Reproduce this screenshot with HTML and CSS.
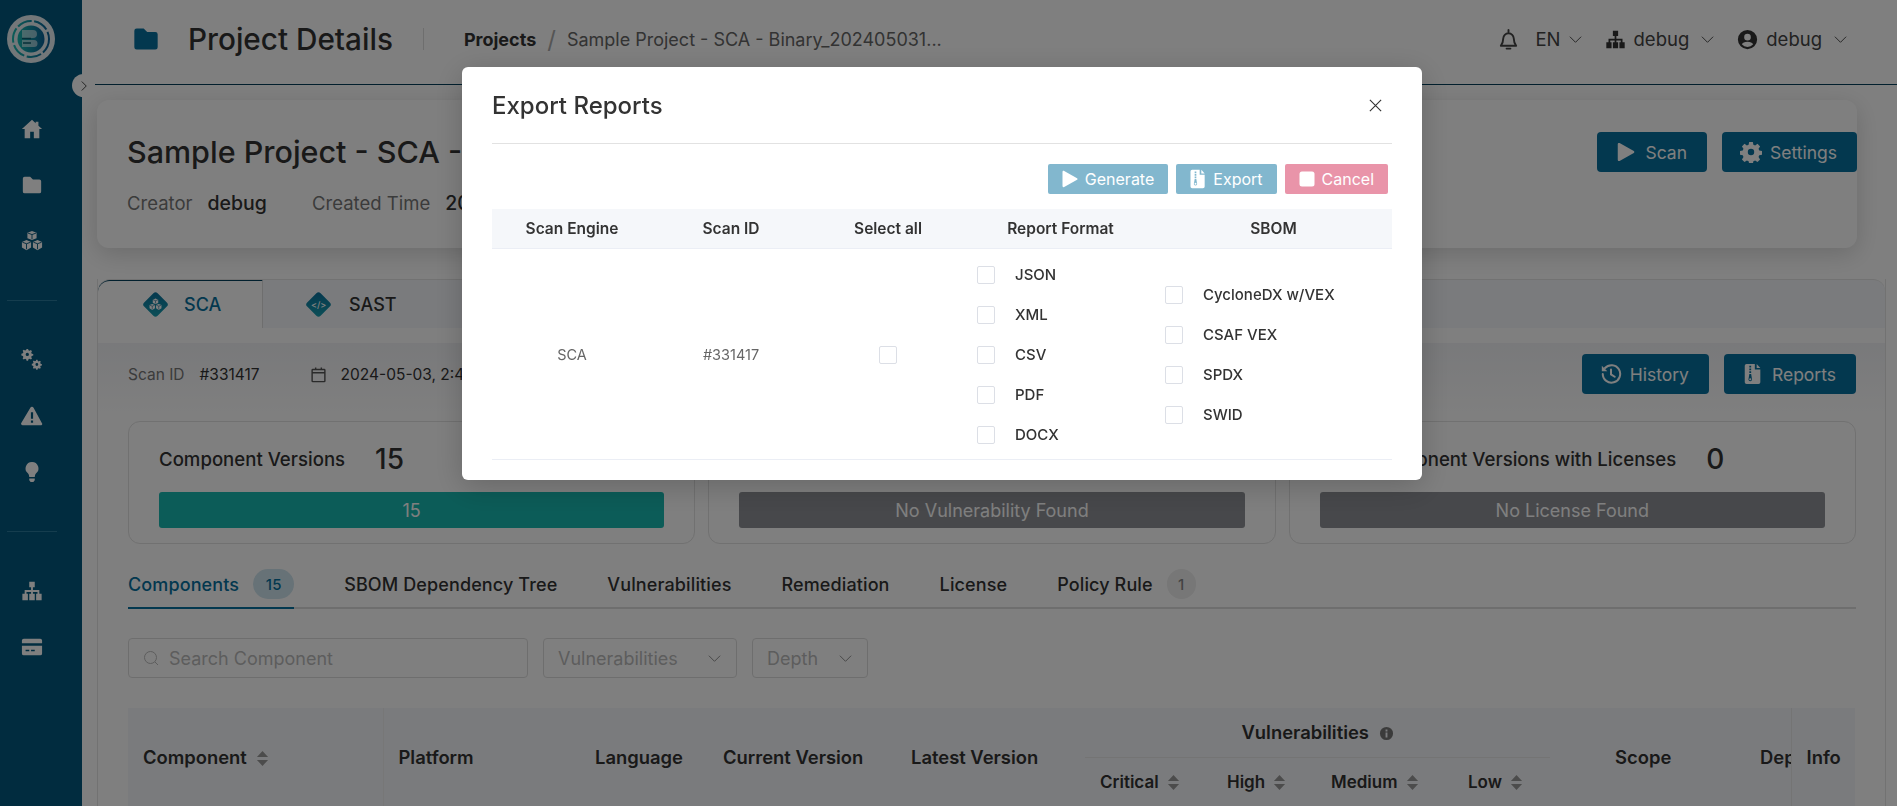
FILE: index.html
```html
<!DOCTYPE html>
<html lang="en">
<head>
    <meta charset="UTF-8">
    <meta name="viewport" content="width=device-width, initial-scale=1.0">
    <title>Project Details</title>
    <link rel="stylesheet" href="styles.css">
</head>
<body>
    <svg class="icon-defs" width="0" height="0">
        <defs>
            <linearGradient id="logo-fill" x1="0" y1="0" x2="1" y2="0">
                <stop offset="0" stop-color="#19b8b0"/>
                <stop offset="1" stop-color="#0a5f96"/>
            </linearGradient>
            <symbol id="i-home" viewBox="0 0 24 24"><path d="M12 2 1 12h3v10h6v-7h4v7h6V12h3l-4-3.600V4h-3v1.700z"/></symbol>
            <symbol id="i-folder" viewBox="0 0 24 24"><path d="M2 5a2 2 0 0 1 2-2h6l3 3h7a2 2 0 0 1 2 2v11a2 2 0 0 1-2 2H4a2 2 0 0 1-2-2z"/></symbol>
            <symbol id="i-cubes" viewBox="0 0 24 24"><path d="m12 1 5 2v6l-5 2-5-2V3zM6 11l5 2v6l-5 3-5-3v-6zM18 11l5 2v6l-5 3-5-3v-6z"/><path class="cut" d="M12 5 7.500 3.300M12 5l4.500-1.700M12 5v5M6 15l-4.500-1.700M6 15l4.500-1.700M6 15v6M18 15l-4.500-1.700M18 15l4.500-1.700M18 15v6"/></symbol>
            <symbol id="i-gears" viewBox="0 0 24 24"><path fill-rule="evenodd" d="M8 1h2l.5 2 1.500.7 1.800-1 1.400 1.400-1 1.800.7 1.500 2 .5v2l-2 .5-.7 1.500 1 1.800-1.400 1.400-1.800-1-1.500.7-.5 2H8l-.5-2-1.500-.7-1.800 1-1.400-1.400 1-1.800-.7-1.500-2-.5V7.400l2-.5.7-1.500-1-1.800 1.400-1.400 1.800 1 1.500-.7zM9 6.200a2.200 2.200 0 1 0 0 4.400 2.200 2.200 0 0 0 0-4.400z" transform="translate(-.5 -1) scale(.82)"/><path fill-rule="evenodd" d="M8 1h2l.5 2 1.500.7 1.800-1 1.400 1.400-1 1.800.7 1.500 2 .5v2l-2 .5-.7 1.500 1 1.800-1.400 1.400-1.800-1-1.500.7-.5 2H8l-.5-2-1.500-.7-1.800 1-1.400-1.400 1-1.800-.7-1.500-2-.5V7.400l2-.5.7-1.500-1-1.800 1.400-1.400 1.800 1 1.500-.7zM9 6.200a2.200 2.200 0 1 0 0 4.400 2.200 2.200 0 0 0 0-4.400z" transform="translate(11 11) scale(.7)"/></symbol>
            <symbol id="i-warning" viewBox="0 0 24 24"><path fill-rule="evenodd" d="M12 2a2 2 0 0 1 1.700 1l9 16.500A1.700 1.700 0 0 1 22.200 22H1.800a1.700 1.700 0 0 1-1.500-2.500l9.900-16.500A2 2 0 0 1 12 2zM10.800 8v7h2.400V8zm0 9v2.400h2.400V17z"/></symbol>
            <symbol id="i-bulb" viewBox="0 0 24 24"><path d="M12 1a7 7 0 0 0-4.500 12.400c.9.900 1.300 2.400 1.500 4.100h6c.2-1.700.6-3.200 1.500-4.100A7 7 0 0 0 12 1zM9 19h6v2l-1.500 2h-3L9 21z"/></symbol>
            <symbol id="i-sitemap" viewBox="0 0 24 24"><path d="M9 2h6v6h-2v3h7v4h2.500v7h-6v-7H18v-2h-5v2h2v7H9v-7h2v-2H6v2h1.500v7h-6v-7H4v-4h7V8H9z"/></symbol>
            <symbol id="i-card" viewBox="0 0 24 24"><path fill-rule="evenodd" d="M3 3h18a2 2 0 0 1 2 2v3H1V5a2 2 0 0 1 2-2zM1 10.500h22V19a2 2 0 0 1-2 2H3a2 2 0 0 1-2-2zM5 15v1.600h4V15zm6 0v1.600h4V15z"/></symbol>
            <symbol id="i-bell" viewBox="0 0 24 24"><path d="M12 2v2M4 18.500c1.500-2 2.500-3.500 2.500-7.500a5.500 5.500 0 0 1 11 0c0 4 1 5.500 2.500 7.500zM10 21.500h4" fill="none" stroke="currentColor" stroke-width="2" stroke-linecap="round" stroke-linejoin="round"/></symbol>
            <symbol id="i-chevron" viewBox="0 0 16 16"><path d="m2 5 6 6 6-6" fill="none" stroke="currentColor" stroke-width="1"/></symbol>
            <symbol id="i-user" viewBox="0 0 24 24"><path fill-rule="evenodd" d="M12 1a11 11 0 1 1 0 22 11 11 0 0 1 0-22zm0 4.500a3.800 3.800 0 1 0 0 7.600 3.800 3.800 0 0 0 0-7.600zM5.500 17.500a8.500 8.500 0 0 0 13 0c-1-1.800-3-2.800-6.500-2.800s-5.500 1-6.500 2.800z"/></symbol>
            <symbol id="i-play" viewBox="0 0 24 24"><path d="M3 3.500c0-1.200 1-1.800 2-1.200l15.500 8.700c.8.500.8 1.600 0 2L5 21.700c-1 .6-2 0-2-1.200z"/></symbol>
            <symbol id="i-gear" viewBox="0 0 24 24"><path fill-rule="evenodd" d="M10 1h4l.6 3 1.900.8 2.600-1.700 2.800 2.800-1.700 2.600.8 1.900 3 .6v4l-3 .6-.8 1.900 1.700 2.600-2.800 2.800-2.600-1.700-1.900.8-.6 3h-4l-.6-3-1.900-.8-2.600 1.700-2.800-2.800 1.700-2.600-.8-1.900-3-.6v-4l3-.6.8-1.900-1.700-2.600 2.800-2.800 2.600 1.700 1.900-.8zM12 8.500a3.500 3.500 0 1 0 0 7 3.500 3.500 0 0 0 0-7z"/></symbol>
            <symbol id="i-history" viewBox="0 0 24 24"><path d="M5.500 5.500A9.500 9.500 0 1 1 3 12M12 7v5.500l4 2.500" fill="none" stroke="currentColor" stroke-width="2.200" stroke-linecap="round"/><path d="M2 3v6h6z"/></symbol>
            <symbol id="i-zip" viewBox="0 0 24 24"><path fill-rule="evenodd" d="M5 1h9v6h6v14a2 2 0 0 1-2 2H5a2 2 0 0 1-2-2V3a2 2 0 0 1 2-2zM8 3v2h2V3zm0 3v2h2V6zm0 3v2h2V9zm0 3-.8 5a2 2 0 1 0 3.600 0L10 12zm1 4.500a1 1 0 1 1 0 2.400 1 1 0 0 1 0-2.400z"/><path d="M16 1l4 4.500h-4z"/></symbol>
            <symbol id="i-stop" viewBox="0 0 24 24"><rect x="3" y="3" width="18" height="18" rx="3"/></symbol>
            <symbol id="i-close" viewBox="0 0 16 16"><path d="m2 2 12 12M14 2 2 14" fill="none" stroke="currentColor" stroke-width="1.200"/></symbol>
            <symbol id="i-search" viewBox="0 0 16 16"><circle cx="7.500" cy="7.500" r="6" fill="none" stroke="currentColor" stroke-width="1"/><path d="m12 12 3 3" stroke="currentColor" stroke-width="1"/></symbol>
            <symbol id="i-calendar" viewBox="0 0 24 24"><path d="M4 5h16a1 1 0 0 1 1 1v15a1 1 0 0 1-1 1H4a1 1 0 0 1-1-1V6a1 1 0 0 1 1-1zM3 9.500h18M8 2v4M16 2v4" fill="none" stroke="currentColor" stroke-width="2"/></symbol>
            <symbol id="i-sort" viewBox="0 0 14 18"><path d="M7 1 13 7.500H1zM7 17 1 10.500h12z"/></symbol>
            <symbol id="i-info" viewBox="0 0 16 16"><path fill-rule="evenodd" d="M8 1a7 7 0 1 1 0 14A7 7 0 0 1 8 1zM7 3.800v2h2v-2zm0 3.200v5.200h2V7z"/></symbol>
        </defs>
    </svg>

    <div class="app">
        <aside class="sidebar">
            <div class="logo">
                <svg viewBox="0 0 48 48" width="48" height="48">
                    <circle cx="24" cy="24" r="24" fill="#fff" opacity=".9"/>
                    <circle cx="24" cy="24" r="18" fill="none" stroke="url(#logo-fill)" stroke-width="2" stroke-dasharray="15 2.500"/>
                    <circle cx="24" cy="24" r="13.500" fill="url(#logo-fill)"/>
                    <path d="M15 15h11a4 4 0 0 1 0 8H15zM15 25h12a3.500 3.500 0 0 1 0 7H15z" fill="#fff" opacity=".55"/>
                    <path d="M15 23.500h9M16 28h8" stroke="#0a5f70" stroke-width="1.500"/>
                </svg>
            </div>
            <button class="sidebar-toggle" type="button"><svg class="toggle-icon" viewBox="0 0 16 16"><path d="m5 2 6 6-6 6" fill="none" stroke="currentColor" stroke-width="1.200"/></svg></button>
            <nav class="side-group side-group-first">
                <svg class="side-icon"><use href="#i-home"/></svg>
                <svg class="side-icon"><use href="#i-folder"/></svg>
                <svg class="side-icon"><use href="#i-cubes"/></svg>
            </nav>
            <hr class="side-line">
            <nav class="side-group">
                <svg class="side-icon"><use href="#i-gears"/></svg>
                <svg class="side-icon"><use href="#i-warning"/></svg>
                <svg class="side-icon"><use href="#i-bulb"/></svg>
            </nav>
            <hr class="side-line">
            <nav class="side-group">
                <svg class="side-icon"><use href="#i-sitemap"/></svg>
                <svg class="side-icon"><use href="#i-card"/></svg>
            </nav>
        </aside>

        <main class="main">
            <header class="topbar">
                <svg class="page-icon"><use href="#i-folder"/></svg>
                <h1 class="page-title">Project Details</h1>
                <nav class="crumbs">
                    <b>Projects</b>
                    <span class="crumb-sep">/</span>
                    <span class="crumb-current">Sample Project - SCA - Binary_202405031...</span>
                </nav>
                <div class="top-actions">
                    <svg class="top-bell"><use href="#i-bell"/></svg>
                    <span class="top-item">EN<svg class="chev chev-lang"><use href="#i-chevron"/></svg></span>
                    <span class="top-item"><svg class="top-icon"><use href="#i-sitemap"/></svg>debug<svg class="chev"><use href="#i-chevron"/></svg></span>
                    <span class="top-item"><svg class="top-icon"><use href="#i-user"/></svg>debug<svg class="chev"><use href="#i-chevron"/></svg></span>
                </div>
            </header>

            <section class="project-card">
                <div>
                    <h2 class="project-name">Sample Project - SCA - Binary_20240503143000</h2>
                    <div class="project-meta">
                        <span class="meta-label">Creator</span><span class="meta-value meta-creator">debug</span>
                        <span class="meta-label">Created Time</span><span class="meta-value">2024-05-03, 2:43:18 PM</span>
                    </div>
                </div>
                <div class="btn-row">
                    <button class="btn" type="button"><svg class="btn-icon"><use href="#i-play"/></svg>Scan</button>
                    <button class="btn" type="button"><svg class="btn-icon"><use href="#i-gear"/></svg>Settings</button>
                </div>
            </section>

            <section class="scan-panel">
                <div class="engine-tabs">
                    <div class="engine-tab engine-tab-on">
                        <span class="diamond"><svg class="diamond-icon"><use href="#i-cubes"/></svg></span>SCA
                    </div>
                    <div class="engine-tab">
                        <span class="diamond"><span class="diamond-code">&lt;/&gt;</span></span>SAST
                    </div>
                </div>
                <div class="panel-body">
                    <div class="scan-row">
                        <span class="scan-label">Scan ID</span>
                        <span class="scan-id">#331417</span>
                        <svg class="scan-cal"><use href="#i-calendar"/></svg>
                        <span class="scan-id">2024-05-03, 2:43:18 PM</span>
                        <div class="btn-row btn-row-push">
                            <button class="btn" type="button"><svg class="btn-icon"><use href="#i-history"/></svg>History</button>
                            <button class="btn" type="button"><svg class="btn-icon"><use href="#i-zip"/></svg>Reports</button>
                        </div>
                    </div>

                    <div class="stats">
                        <div class="stat">
                            <div class="stat-head"><span>Component Versions</span><b>15</b></div>
                            <div class="stat-bar stat-bar-ok">15</div>
                        </div>
                        <div class="stat">
                            <div class="stat-head"><span>Vulnerabilities</span><b>0</b></div>
                            <div class="stat-bar">No Vulnerability Found</div>
                        </div>
                        <div class="stat">
                            <div class="stat-head stat-head-long"><span>Component Versions with Licenses</span><b>0</b></div>
                            <div class="stat-bar">No License Found</div>
                        </div>
                    </div>

                    <div class="sub-tabs">
                        <span class="sub-tab sub-tab-on">Components <i class="count count-on">15</i></span>
                        <span class="sub-tab">SBOM Dependency Tree</span>
                        <span class="sub-tab">Vulnerabilities</span>
                        <span class="sub-tab">Remediation</span>
                        <span class="sub-tab">License</span>
                        <span class="sub-tab">Policy Rule <i class="count">1</i></span>
                    </div>

                    <div class="filters">
                        <div class="field field-search"><svg class="search-icon"><use href="#i-search"/></svg>Search Component</div>
                        <div class="field field-vuln">Vulnerabilities<svg class="chev"><use href="#i-chevron"/></svg></div>
                        <div class="field field-depth">Depth<svg class="chev"><use href="#i-chevron"/></svg></div>
                    </div>

                    <table class="comp-table">
                        <colgroup>
                            <col class="c-comp"><col class="c-plat"><col class="c-lang"><col class="c-curr"><col class="c-last">
                            <col class="c-crit"><col class="c-high"><col class="c-med"><col class="c-low">
                            <col class="c-gap"><col class="c-scope"><col class="c-dep"><col class="c-info">
                        </colgroup>
                        <thead>
                            <tr>
                                <th rowspan="2" class="th-comp">Component <svg class="sort"><use href="#i-sort"/></svg></th>
                                <th rowspan="2">Platform</th>
                                <th rowspan="2">Language</th>
                                <th rowspan="2">Current Version</th>
                                <th rowspan="2">Latest Version</th>
                                <th colspan="4" class="th-vuln">Vulnerabilities <svg class="info"><use href="#i-info"/></svg></th>
                                <th rowspan="2"></th>
                                <th rowspan="2">Scope</th>
                                <th rowspan="2">Dependency</th>
                                <th rowspan="2" class="th-info">Info</th>
                            </tr>
                            <tr class="tr-sub">
                                <th>Critical <svg class="sort"><use href="#i-sort"/></svg></th>
                                <th>High <svg class="sort"><use href="#i-sort"/></svg></th>
                                <th>Medium <svg class="sort"><use href="#i-sort"/></svg></th>
                                <th>Low <svg class="sort"><use href="#i-sort"/></svg></th>
                            </tr>
                        </thead>
                    </table>
                </div>
            </section>
        </main>
    </div>

    <div class="backdrop"></div>

    <div class="modal">
        <div class="modal-head">
            <h3 class="modal-title">Export Reports</h3>
            <svg class="modal-close"><use href="#i-close"/></svg>
        </div>
        <div class="modal-actions">
            <button class="btn btn-small btn-off" type="button"><svg class="btn-icon"><use href="#i-play"/></svg>Generate</button>
            <button class="btn btn-small btn-off" type="button"><svg class="btn-icon"><use href="#i-zip"/></svg>Export</button>
            <button class="btn btn-small btn-off btn-cancel" type="button"><svg class="btn-icon"><use href="#i-stop"/></svg>Cancel</button>
        </div>
        <table class="export-table">
            <thead>
                <tr>
                    <th class="x-engine">Scan Engine</th>
                    <th class="x-id">Scan ID</th>
                    <th class="x-all">Select all</th>
                    <th class="x-format">Report Format</th>
                    <th class="x-sbom">SBOM</th>
                </tr>
            </thead>
            <tbody>
                <tr>
                    <td>SCA</td>
                    <td>#331417</td>
                    <td><span class="check check-center"></span></td>
                    <td class="x-list">
                        <label class="opt"><span class="check"></span>JSON</label>
                        <label class="opt"><span class="check"></span>XML</label>
                        <label class="opt"><span class="check"></span>CSV</label>
                        <label class="opt"><span class="check"></span>PDF</label>
                        <label class="opt"><span class="check"></span>DOCX</label>
                    </td>
                    <td class="x-list x-list-sbom">
                        <label class="opt"><span class="check"></span>CycloneDX w/VEX</label>
                        <label class="opt"><span class="check"></span>CSAF VEX</label>
                        <label class="opt"><span class="check"></span>SPDX</label>
                        <label class="opt"><span class="check"></span>SWID</label>
                    </td>
                </tr>
            </tbody>
        </table>
    </div>
</body>
</html>
```

FILE: styles.css
```css
* {
    box-sizing: border-box;
}

html, body {
    height: 100%;
}

body {
    margin: 0;
    overflow: hidden;
    font-family: Inter, "Open Sans", sans-serif;
    font-size: 14px;
    color: #333;
    background-color: #fff;
}

.icon-defs {
    position: absolute;
}

.app {
    display: flex;
    height: 806px;
    overflow: hidden;
}

/* sidebar */
.sidebar {
    position: relative;
    flex: 0 0 82px;
    display: flex;
    flex-direction: column;
    align-items: center;
    padding-right: 18px;
    background-color: #02587e;
    color: #fff;
}

.logo {
    display: flex;
    width: 48px;
    height: 48px;
    margin: 15px 2px 0 0;
}

.sidebar-toggle {
    position: absolute;
    top: 74px;
    left: 72px;
    display: flex;
    align-items: center;
    justify-content: center;
    width: 23px;
    height: 23px;
    padding: 0;
    border: none;
    border-radius: 50%;
    background-color: #fff;
    color: #333;
}

.toggle-icon {
    width: 12px;
    height: 12px;
}

.side-group {
    display: flex;
    flex-direction: column;
    align-items: center;
    gap: 34px;
}

.side-group-first {
    margin-top: 55px;
}

.side-icon {
    width: 22px;
    height: 22px;
    fill: #fff;
}

.cut {
    fill: none;
    stroke: #02587e;
    stroke-width: 1;
}

.side-line {
    width: 50px;
    height: 1px;
    margin: 48px 0;
    border: none;
    background-color: #2a7a9c;
}

/* top bar */
.main {
    flex: 1;
    min-width: 0;
}

.topbar {
    display: flex;
    align-items: center;
    height: 85px;
    margin-left: 13px;
    padding: 0 49px 6px 37px;
    border-bottom: 1px solid #05405c;
}

.page-icon {
    width: 28px;
    height: 28px;
    fill: #07719e;
}

.page-title {
    margin: 0 0 0 28px;
    font-size: 29.700px;
    font-weight: 500;
    line-height: 40px;
    color: #333;
}

.crumbs {
    display: flex;
    align-items: center;
    height: 22px;
    margin-left: 30px;
    padding-left: 40px;
    border-left: 1px solid #ddd;
    font-size: 18px;
    white-space: nowrap;
}

.crumbs b {
    font-weight: 700;
}

.crumb-sep {
    margin: 0 11px;
    font-size: 24px;
    color: #aaa;
}

.crumb-current {
    color: #666;
}

.top-actions {
    display: flex;
    align-items: center;
    margin-left: auto;
    font-size: 18.500px;
    color: #444;
}

.top-bell {
    width: 23px;
    height: 23px;
    margin-right: 15px;
}

.top-item {
    display: flex;
    align-items: center;
    margin-right: 22px;
}

.top-item:last-child {
    margin-right: 0;
}

.top-icon {
    width: 21px;
    height: 21px;
    margin-right: 8px;
    fill: #333;
}

.chev {
    width: 15px;
    height: 15px;
    margin-left: 11px;
}

.chev-lang {
    margin-left: 7px;
}

/* project card */
.project-card {
    display: flex;
    justify-content: space-between;
    height: 148px;
    margin: 15px 40px 0 15px;
    padding: 32px 0 0 30px;
    border-radius: 12px;
    background-color: #fff;
    box-shadow: 0 6px 24px rgba(0, 0, 0, 0.16);
}

.project-name {
    margin: 0;
    font-size: 30.500px;
    font-weight: 500;
    line-height: 40px;
    color: #333;
}

.project-meta {
    margin-top: 19px;
    font-size: 18.500px;
    line-height: 24px;
}

.meta-label {
    color: #777;
}

.meta-value {
    margin-left: 15px;
    font-size: 19.500px;
    font-weight: 500;
    color: #333;
}

.meta-creator {
    margin-right: 40px;
}

.btn-row {
    display: flex;
    gap: 15px;
}

.btn {
    display: inline-flex;
    align-items: center;
    justify-content: center;
    gap: 8px;
    height: 40px;
    padding: 0 20px 0 18px;
    border: none;
    border-radius: 4px;
    background-color: #07719e;
    font: inherit;
    font-size: 17.500px;
    color: #fff;
}

.btn-icon {
    width: 22px;
    height: 22px;
    fill: #fff;
}

/* scan panel */
.scan-panel {
    margin: 31px 11px 0 15px;
    border-left: 1px solid #e4e4e4;
    border-right: 1px solid #e4e4e4;
}

.engine-tabs {
    display: flex;
    height: 49px;
    border-top: 1px solid #e4e4e4;
    border-radius: 12px 12px 0 0;
    background-color: #f5f7fa;
}

.engine-tab {
    display: flex;
    align-items: center;
    gap: 21px;
    width: 165px;
    padding-left: 46px;
    font-size: 18px;
    font-weight: 500;
    color: #333;
}

.engine-tab-on {
    gap: 19px;
    padding-left: 48px;
    border-top: 1px solid #05405c;
    border-right: 1px solid #ddd;
    border-radius: 12px 0 0 0;
    background-color: #fff;
    color: #07719e;
}

.diamond {
    display: flex;
    align-items: center;
    justify-content: center;
    width: 19px;
    height: 19px;
    border-radius: 3px;
    background: linear-gradient(135deg, #0a6f9c, #19a0b0);
    transform: rotate(45deg);
}

.diamond-icon {
    width: 13px;
    height: 13px;
    fill: #fff;
    transform: rotate(-45deg);
}

.diamond-code {
    font-size: 9px;
    color: #fff;
    transform: rotate(-45deg);
}

.panel-body {
    height: 463px;
    margin-top: 15px;
    padding: 11px 29px 0 30px;
    background: linear-gradient(#f2f3f6, #fff 75px);
}

.scan-row {
    display: flex;
    align-items: center;
    height: 40px;
}

.scan-label {
    margin-right: 15px;
    font-size: 15.500px;
    color: #777;
}

.scan-id {
    font-size: 15.500px;
    color: #333;
}

.scan-cal {
    width: 17px;
    height: 17px;
    margin: 0 14px 0 50px;
    color: #555;
}

.btn-row-push {
    margin-left: auto;
}

/* stat boxes */
.stats {
    display: flex;
    gap: 13px;
    margin-top: 27px;
}

.stat {
    flex: 1;
    height: 123px;
    padding: 16px 30px 0;
    border: 1px solid #e2e2e2;
    border-radius: 12px;
}

.stat-head {
    display: flex;
    align-items: center;
    gap: 30px;
    height: 41px;
    font-size: 18.600px;
    font-weight: 500;
    color: #333;
}

.stat-head-long {
    padding-left: 44px;
    white-space: nowrap;
}

.stat-head b {
    font-size: 28px;
    font-weight: 500;
}

.stat-bar {
    display: flex;
    align-items: center;
    justify-content: center;
    height: 36px;
    margin-top: 13px;
    border-radius: 3px;
    background-color: #8e9096;
    font-size: 18px;
    color: #fff;
}

.stat-bar-ok {
    background-color: #19b8b0;
}

/* sub tabs */
.sub-tabs {
    display: flex;
    align-items: flex-start;
    gap: 50px;
    height: 52px;
    margin-top: 13px;
    padding-top: 4px;
    border-bottom: 2px solid #ddd;
}

.sub-tab {
    display: flex;
    align-items: center;
    height: 46px;
    font-size: 18px;
    font-weight: 500;
    letter-spacing: 0.12px;
    color: #333;
}

.sub-tab-on {
    height: 48px;
    border-bottom: 2px solid #07719e;
    color: #07719e;
}

.count {
    display: flex;
    align-items: center;
    justify-content: center;
    min-width: 29px;
    height: 30px;
    margin-left: 14px;
    border-radius: 15px;
    background-color: #eee;
    font-size: 15px;
    font-style: normal;
    color: #888;
}

.count-on {
    min-width: 41px;
    background-color: #cfe4ee;
    color: #07719e;
}

/* filters */
.filters {
    display: flex;
    gap: 15px;
    margin-top: 29px;
}

.field {
    display: flex;
    align-items: center;
    justify-content: space-between;
    height: 40px;
    padding: 0 14px;
    border: 1px solid #ddd;
    border-radius: 4px;
    font-size: 18px;
    color: #bbb;
}

.field .chev {
    margin-left: 0;
    color: #888;
}

.field-search {
    justify-content: flex-start;
    width: 400px;
}

.field-vuln {
    width: 194px;
}

.field-depth {
    width: 116px;
}

.search-icon {
    width: 16px;
    height: 18px;
    margin-right: 10px;
}

/* component table */
.comp-table {
    width: 1727px;
    margin-top: 30px;
    border-collapse: collapse;
    table-layout: fixed;
    background-color: #f5f7fa;
    font-size: 18.400px;
    color: #333;
}

.comp-table th {
    overflow: hidden;
    height: 49px;
    padding: 0 0 0 15px;
    font-weight: 600;
    text-align: left;
    white-space: nowrap;
}

.c-comp { width: 255px; }
.c-plat { width: 197px; }
.c-lang { width: 128px; }
.c-curr { width: 188px; }
.c-last { width: 189px; }
.c-crit { width: 127px; }
.c-high { width: 104px; }
.c-med { width: 137px; }
.c-low { width: 97px; }
.c-gap { width: 50px; }
.c-scope { width: 145px; }
.c-dep { width: 46px; }
.c-info { width: 64px; }

.comp-table .th-comp {
    border-right: 1px solid #eee;
}

.comp-table .th-info {
    border-left: 1px solid #e8e8e8;
}

.comp-table .th-vuln {
    padding: 0;
    border-bottom: 1px solid #e8e8e8;
    text-align: center;
}

.tr-sub th {
    font-size: 17px;
}

.sort {
    width: 13px;
    height: 17px;
    margin-left: 4px;
    vertical-align: -3px;
    fill: #999;
}

.info {
    width: 15px;
    height: 15px;
    margin-left: 5px;
    vertical-align: -2px;
    fill: #777;
}

/* dimmer and dialog */
.backdrop {
    position: fixed;
    inset: 0;
    background-color: rgba(0, 0, 0, 0.5);
}

.modal {
    position: fixed;
    top: 67px;
    left: 462px;
    width: 960px;
    height: 413px;
    padding: 0 30px;
    border-radius: 6px;
    background-color: #fff;
    box-shadow: 0 6px 30px rgba(0, 0, 0, 0.2);
}

.modal-head {
    display: flex;
    align-items: center;
    justify-content: space-between;
    height: 77px;
    padding: 0 9px 0 0;
    border-bottom: 1px solid #e2e2e2;
}

.modal-title {
    margin: 0;
    font-size: 24px;
    font-weight: 500;
    color: #333;
}

.modal-close {
    width: 15px;
    height: 15px;
    color: #333;
}

.modal-actions {
    display: flex;
    justify-content: flex-end;
    gap: 8px;
    margin-top: 20px;
    padding-right: 4px;
}

.btn-small {
    gap: 5px;
    height: 30px;
    padding: 0 14px 0 12px;
    border-radius: 2px;
    font-size: 16px;
}

.btn-small .btn-icon {
    width: 20px;
    height: 20px;
}

.btn-off {
    opacity: 0.5;
}

.btn-cancel {
    background-color: #d32b55;
}

.export-table {
    width: 900px;
    margin-top: 15px;
    border-collapse: collapse;
    table-layout: fixed;
    font-size: 14.500px;
}

.export-table th {
    height: 39px;
    border-bottom: 1px solid #ebeef5;
    background-color: #f5f7fa;
    font-size: 15.500px;
    font-weight: 600;
    color: #333;
}

.export-table td {
    padding: 6px 0 4px;
    border-bottom: 1px solid #ebeef5;
    text-align: center;
    color: #666;
}

.x-engine { width: 160px; }
.x-id { width: 158px; }
.x-all { width: 156px; }
.x-format { width: 189px; }
.x-sbom { width: 237px; }

.export-table .x-list {
    padding-left: 11px;
    text-align: left;
}

.export-table .x-list-sbom {
    padding-left: 10px;
}

.opt {
    display: flex;
    align-items: center;
    height: 40px;
    font-size: 15px;
    font-weight: 500;
    color: #333;
}

.check {
    flex: none;
    display: inline-block;
    width: 18px;
    height: 18px;
    margin-right: 20px;
    border: 1px solid #dcdfe6;
    border-radius: 2px;
    background-color: #fff;
}

.check-center {
    margin-right: 0;
    vertical-align: middle;
}
```
